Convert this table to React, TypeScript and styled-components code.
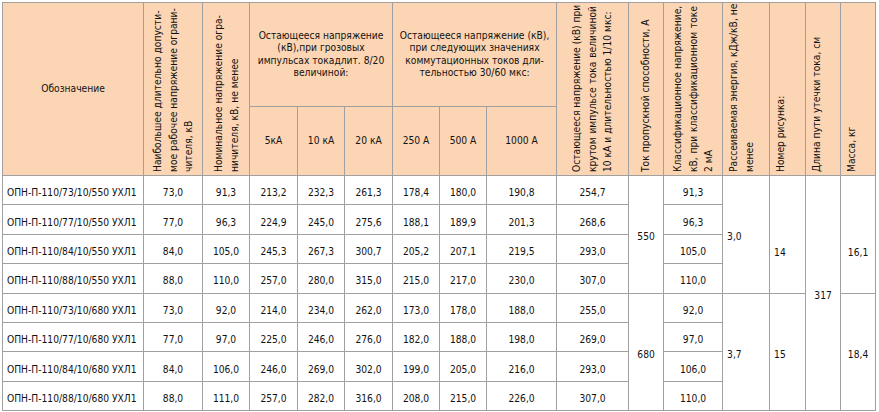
import React from "react";
import styled, { createGlobalStyle } from "styled-components";

const GlobalStyle = createGlobalStyle`
  body {
    margin: 0;
    background: #ffffff;
  }
`;

const Page = styled.div`
  padding: 2px 0 0 2px;
`;

const Table = styled.table`
  border-collapse: collapse;
  table-layout: fixed;
  width: 874px;
  font-family: "DejaVu Sans Condensed", "DejaVu Sans", sans-serif;
  font-size: 10.2px;
  color: #121212;
`;

const HeadRow = styled.tr<{ $h: number }>`
  height: ${(p) => p.$h}px;
`;

const BodyRow = styled.tr`
  height: 29.4px;
`;

const HeadCell = styled.th<{ $align?: "left" | "center" }>`
  background: #fcd5b4;
  border: 1px solid #a0a0a0;
  font-weight: normal;
  padding: 3px 3px;
  line-height: 12.5px;
  text-align: ${(p) => p.$align ?? "center"};
  vertical-align: middle;
`;

const Vertical = styled.div`
  display: inline-block;
  vertical-align: middle;
  writing-mode: vertical-rl;
  transform: rotate(180deg);
  height: 166px;
  line-height: 15.5px;
  text-align: left;
  white-space: nowrap;
`;

const Line = styled.span<{ $justify?: boolean }>`
  display: block;
  text-align-last: ${(p) => (p.$justify ? "justify" : "auto")};
`;

const Cell = styled.td<{ $align?: "left" | "center"; $drop?: boolean }>`
  border: 1px solid #a0a0a0;
  padding: ${(p) => (p.$drop ? "36px" : "5px")} 4px 0;
  text-align: ${(p) => p.$align ?? "center"};
  vertical-align: middle;
  white-space: nowrap;
`;

const widths = [141, 59, 47, 48, 47, 48, 47, 47, 70, 72, 35, 59, 47, 36, 35, 35];

type Row = { name: string; values: string[]; klass: string };

const rows: Row[] = [
  { name: "ОПН-П-110/73/10/550 УХЛ1", values: ["73,0", "91,3", "213,2", "232,3", "261,3", "178,4", "180,0", "190,8", "254,7"], klass: "91,3" },
  { name: "ОПН-П-110/77/10/550 УХЛ1", values: ["77,0", "96,3", "224,9", "245,0", "275,6", "188,1", "189,9", "201,3", "268,6"], klass: "96,3" },
  { name: "ОПН-П-110/84/10/550 УХЛ1", values: ["84,0", "105,0", "245,3", "267,3", "300,7", "205,2", "207,1", "219,5", "293,0"], klass: "105,0" },
  { name: "ОПН-П-110/88/10/550 УХЛ1", values: ["88,0", "110,0", "257,0", "280,0", "315,0", "215,0", "217,0", "230,0", "307,0"], klass: "110,0" },
  { name: "ОПН-П-110/73/10/680 УХЛ1", values: ["73,0", "92,0", "214,0", "234,0", "262,0", "173,0", "178,0", "188,0", "255,0"], klass: "92,0" },
  { name: "ОПН-П-110/77/10/680 УХЛ1", values: ["77,0", "97,0", "225,0", "246,0", "276,0", "182,0", "188,0", "198,0", "269,0"], klass: "97,0" },
  { name: "ОПН-П-110/84/10/680 УХЛ1", values: ["84,0", "106,0", "246,0", "269,0", "302,0", "199,0", "205,0", "216,0", "293,0"], klass: "106,0" },
  { name: "ОПН-П-110/88/10/680 УХЛ1", values: ["88,0", "111,0", "257,0", "282,0", "316,0", "208,0", "215,0", "226,0", "307,0"], klass: "110,0" },
];

const groups: Record<number, { current: string; energy: string; figure: string; mass: string }> = {
  0: { current: "550", energy: "3,0", figure: "14", mass: "16,1" },
  4: { current: "680", energy: "3,7", figure: "15", mass: "18,4" },
};

export default function App() {
  return (
    <Page>
      <GlobalStyle />
      <Table>
        <colgroup>
          {widths.map((w, i) => (
            <col key={i} style={{ width: w }} />
          ))}
        </colgroup>
        <thead>
          <HeadRow $h={104}>
            <HeadCell rowSpan={2}>Обозначение</HeadCell>
            <HeadCell rowSpan={2}>
              <Vertical>
                <Line>Наибольшее длительно допусти-</Line>
                <Line>мое рабочее напряжение ограни-</Line>
                <Line>чителя, кВ</Line>
              </Vertical>
            </HeadCell>
            <HeadCell rowSpan={2}>
              <Vertical>
                <Line>Номинальное напряжение огра-</Line>
                <Line>ничителя, кВ, не менее</Line>
              </Vertical>
            </HeadCell>
            <HeadCell colSpan={3}>
              Остающееся напряжение
              <br />
              (кВ),при грозовых
              <br />
              импульсах токадлит. 8/20
              <br />
              величиной:
            </HeadCell>
            <HeadCell colSpan={3}>
              Остающееся напряжение (кВ),
              <br />
              при следующих значениях
              <br />
              коммутационных токов дли-
              <br />
              тельностью 30/60 мкс:
            </HeadCell>
            <HeadCell rowSpan={2}>
              <Vertical>
                <Line $justify>Остающееся напряжение (кВ) при</Line>
                <Line $justify>крутом импульсе тока величиной</Line>
                <Line>10 кА и длительностью 1/10 мкс:</Line>
              </Vertical>
            </HeadCell>
            <HeadCell rowSpan={2}>
              <Vertical>
                <Line>Ток пропускной способности, А</Line>
              </Vertical>
            </HeadCell>
            <HeadCell rowSpan={2}>
              <Vertical>
                <Line>Классификационное напряжение,</Line>
                <Line $justify>кВ, при классификационном токе</Line>
                <Line>2 мА</Line>
              </Vertical>
            </HeadCell>
            <HeadCell rowSpan={2} $align="left">
              <Vertical>
                <Line $justify>Рассеиваемая энергия, кДж/кВ, не</Line>
                <Line>менее</Line>
              </Vertical>
            </HeadCell>
            <HeadCell rowSpan={2} $align="left">
              <Vertical>
                <Line>Номер рисунка:</Line>
              </Vertical>
            </HeadCell>
            <HeadCell rowSpan={2} $align="left">
              <Vertical>
                <Line>Длина пути утечки тока, см</Line>
              </Vertical>
            </HeadCell>
            <HeadCell rowSpan={2} $align="left">
              <Vertical>
                <Line>Масса, кг</Line>
              </Vertical>
            </HeadCell>
          </HeadRow>
          <HeadRow $h={69}>
            <HeadCell>5кА</HeadCell>
            <HeadCell>10 кА</HeadCell>
            <HeadCell>20 кА</HeadCell>
            <HeadCell>250 А</HeadCell>
            <HeadCell>500 А</HeadCell>
            <HeadCell>1000 А</HeadCell>
          </HeadRow>
        </thead>
        <tbody>
          {rows.map((row, i) => {
            const g = groups[i];
            return (
              <BodyRow key={row.name}>
                <Cell $align="left">{row.name}</Cell>
                {row.values.map((v, j) => (
                  <Cell key={j}>{v}</Cell>
                ))}
                {g && <Cell rowSpan={4}>{g.current}</Cell>}
                <Cell>{row.klass}</Cell>
                {g && (
                  <Cell rowSpan={4} $align="left">
                    {g.energy}
                  </Cell>
                )}
                {g && (
                  <Cell rowSpan={4} $align="left" $drop={i === 0}>
                    {g.figure}
                  </Cell>
                )}
                {i === 0 && <Cell rowSpan={8}>317</Cell>}
                {g && (
                  <Cell rowSpan={4} $drop={i === 0}>
                    {g.mass}
                  </Cell>
                )}
              </BodyRow>
            );
          })}
        </tbody>
      </Table>
    </Page>
  );
}
